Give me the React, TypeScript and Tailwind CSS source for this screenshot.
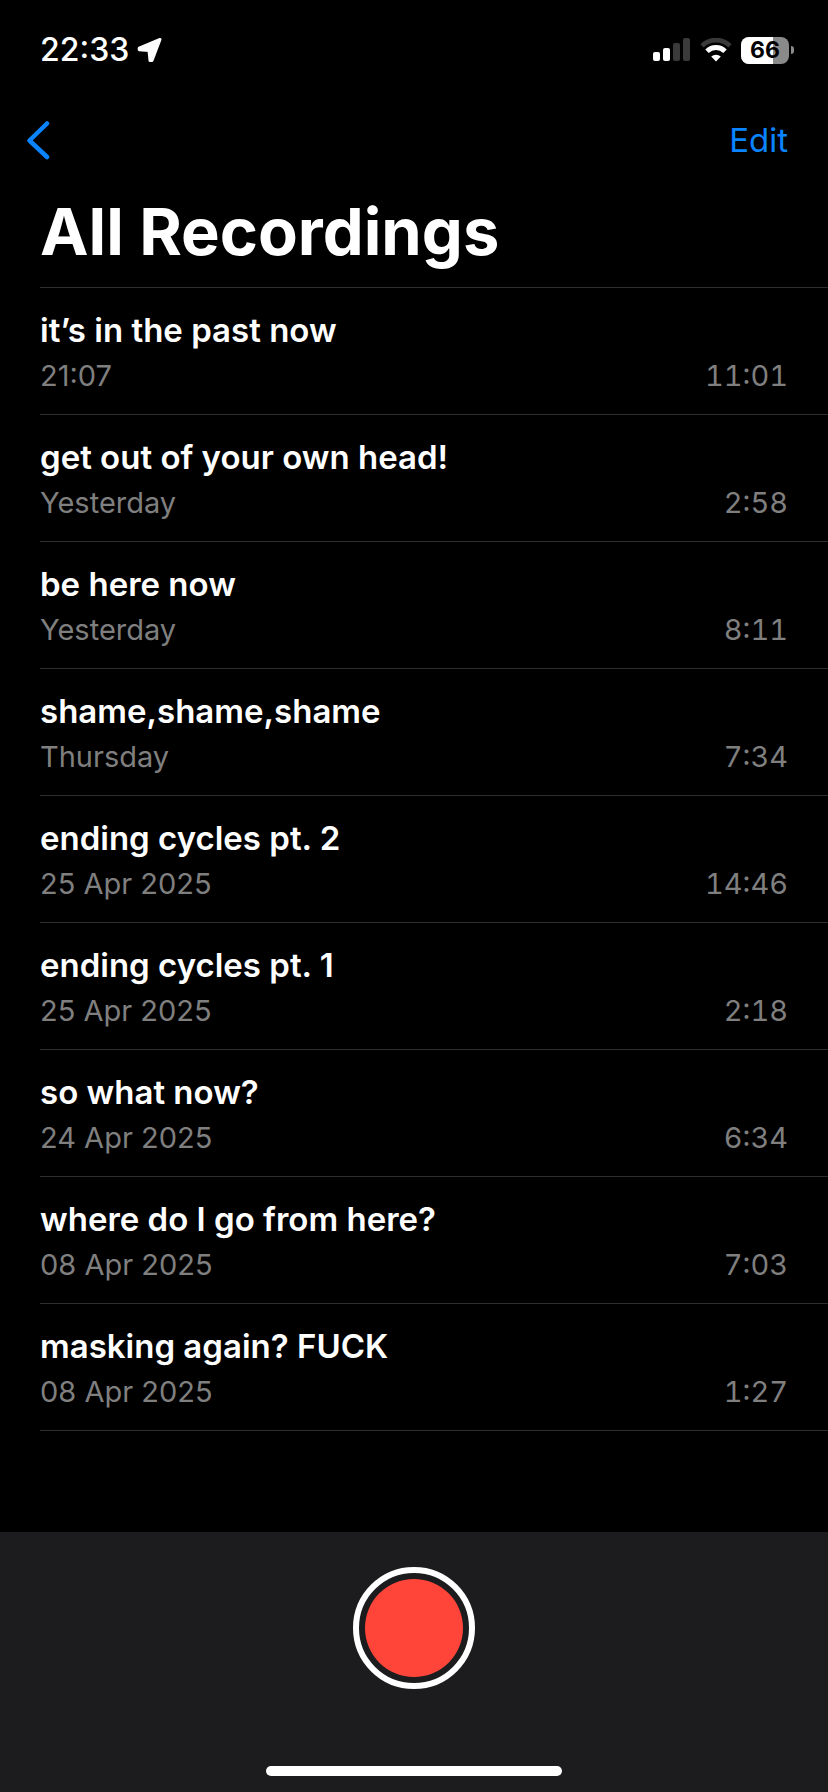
import { ReactNode } from 'react';

type Recording = {
  title: string;
  date: string;
  duration: string;
};

const recordings: Recording[] = [
  { title: 'it’s in the past now', date: '21:07', duration: '11:01' },
  { title: 'get out of your own head!', date: 'Yesterday', duration: '2:58' },
  { title: 'be here now', date: 'Yesterday', duration: '8:11' },
  { title: 'shame,shame,shame', date: 'Thursday', duration: '7:34' },
  { title: 'ending cycles pt. 2', date: '25 Apr 2025', duration: '14:46' },
  { title: 'ending cycles pt. 1', date: '25 Apr 2025', duration: '2:18' },
  { title: 'so what now?', date: '24 Apr 2025', duration: '6:34' },
  { title: 'where do I go from here?', date: '08 Apr 2025', duration: '7:03' },
  { title: 'masking again? FUCK', date: '08 Apr 2025', duration: '1:27' },
];

function LocationIcon() {
  return (
    <svg width="26" height="26" viewBox="0 0 26 26" aria-hidden="true">
      <path
        d="M23 2.500L2.200 11.200V12.800L12 13.500L13 23.500H15z"
        fill="currentColor"
        stroke="currentColor"
        strokeWidth="3"
        strokeLinejoin="round"
      />
    </svg>
  );
}

function SignalIcon() {
  return (
    <svg width="38" height="24" viewBox="0 0 38 24" aria-hidden="true">
      <rect x="0" y="14" width="7" height="9" rx="2" fill="#fff" />
      <rect x="10" y="10" width="7" height="13" rx="2" fill="#fff" />
      <rect x="20" y="5" width="7" height="18" rx="2" fill="#3a3a3a" />
      <rect x="30" y="0" width="7" height="23" rx="2" fill="#3a3a3a" />
    </svg>
  );
}

function WifiIcon() {
  return (
    <svg width="32" height="24" viewBox="0 0 32 24" fill="none" aria-hidden="true">
      <path d="M2 7.800a20 20 0 0 1 28 0" stroke="#3a3a3a" strokeWidth="4.600" />
      <path d="M7 13.200a13 13 0 0 1 18 0" stroke="#fff" strokeWidth="5" />
      <path d="M16 23.500l-4.800-4.900a7 7 0 0 1 9.600 0z" fill="#fff" />
    </svg>
  );
}

function Battery({ level }: { level: number }) {
  return (
    <div className="flex items-center gap-0.5">
      <div className="relative flex h-[27px] w-12 items-center justify-center overflow-hidden rounded-lg bg-[#8a8a8a]">
        <div className="absolute inset-y-0 left-0 bg-white" style={{ width: `${level}%` }} />
        <span className="relative text-[23px] font-bold leading-[27px] text-black">{level}</span>
      </div>
      <div className="h-2 w-[3px] rounded-r-full bg-[#8a8a8a]" />
    </div>
  );
}

function StatusBar() {
  return (
    <div className="flex h-[100px] items-center justify-between pl-10 pr-[34px]">
      <div className="flex items-center gap-2">
        <span className="text-[32px] font-medium leading-10">22:33</span>
        <LocationIcon />
      </div>
      <div className="flex items-center gap-[9px]">
        <SignalIcon />
        <WifiIcon />
        <Battery level={66} />
      </div>
    </div>
  );
}

function NavButton({ label, children }: { label: string; children: ReactNode }) {
  return (
    <button type="button" aria-label={label} className="text-[33px] leading-10 text-[#0a84ff]">
      {children}
    </button>
  );
}

function RecordingRow({ title, date, duration }: Recording) {
  return (
    <li className="border-b border-[#2e2e30] pb-5 pr-10 pt-[22px]">
      <h2 className="text-[33px] font-semibold leading-10">{title}</h2>
      <div className="mt-2 flex justify-between text-[29px] leading-9 text-[#7f7f7f]">
        <span>{date}</span>
        <span className="tabular-nums">{duration}</span>
      </div>
    </li>
  );
}

export default function App() {
  return (
    <div className="flex min-h-screen flex-col bg-black font-['Inter',sans-serif] text-white">
      <StatusBar />

      <nav className="flex h-20 items-center justify-between pl-[26px] pr-10">
        <NavButton label="Back">
          <svg width="24" height="40" viewBox="0 0 24 40" fill="none" aria-hidden="true">
            <path d="M21 3.500L3.500 20.500L21 37" stroke="currentColor" strokeWidth="4.500" strokeLinecap="round" strokeLinejoin="round" />
          </svg>
        </NavButton>
        <NavButton label="Edit">Edit</NavButton>
      </nav>

      <main className="flex-1 pl-10">
        <h1 className="pb-[15px] pt-3 text-[65px] font-bold leading-[80px]">All Recordings</h1>
        <ul className="border-t border-[#2e2e30]">
          {recordings.map((recording) => (
            <RecordingRow key={recording.title} {...recording} />
          ))}
        </ul>
      </main>

      <footer className="flex h-[260px] flex-col items-center justify-between bg-[#1c1c1e] pb-4 pt-[35px]">
        <button
          type="button"
          aria-label="Record"
          className="size-[122px] rounded-full border-[6px] border-white p-1.5"
        >
          <span className="block size-full rounded-full bg-[#ff453a]" />
        </button>
        <div className="h-2.5 w-[296px] rounded-full bg-white" />
      </footer>
    </div>
  );
}
